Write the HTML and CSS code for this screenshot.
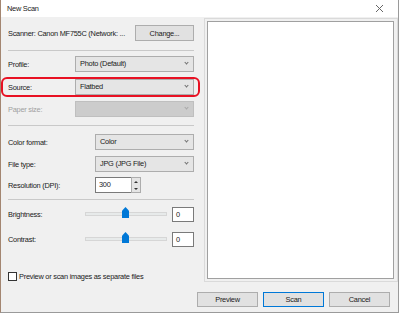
FILE: index.html
```html
<!DOCTYPE html>
<html lang="en">
<head>
  <meta charset="UTF-8">
  <title>New Scan</title>
  <link rel="stylesheet" href="styles.css">
</head>
<body>
  <div class="window">
    <div class="titlebar">
      <span>New Scan</span>
      <svg class="close" width="9" height="9" viewBox="0 0 9 9">
        <path d="M1 1 L8 8 M8 1 L1 8" stroke="#666" stroke-width="1"/>
      </svg>
    </div>

    <div class="main">
      <div class="settings">
        <div class="row scanner">
          <span class="label">Scanner: Canon MF755C (Network: ...</span>
          <button class="btn change">Change...</button>
        </div>
        <div class="sep"></div>

        <div class="row">
          <span class="label">Profile:</span>
          <div class="combo wide">Photo (Default)<span class="chev"></span></div>
        </div>
        <div class="row source">
          <span class="label">Source:</span>
          <div class="combo wide">Flatbed<span class="chev"></span></div>
        </div>
        <div class="row disabled">
          <span class="label">Paper size:</span>
          <div class="combo wide"><span class="chev"></span></div>
        </div>
        <div class="sep sep2"></div>

        <div class="row r-color">
          <span class="label long">Color format:</span>
          <div class="combo narrow">Color<span class="chev"></span></div>
        </div>
        <div class="row r-type">
          <span class="label long">File type:</span>
          <div class="combo narrow">JPG (JPG File)<span class="chev"></span></div>
        </div>
        <div class="row r-res">
          <span class="label long">Resolution (DPI):</span>
          <div class="spin">
            <div class="field">300</div>
            <div class="arrows">
              <span class="up"></span>
              <span class="down"></span>
            </div>
          </div>
        </div>
        <div class="sep sep3"></div>

        <div class="row r-bright">
          <span class="label slide-label">Brightness:</span>
          <div class="slider"><div class="track"></div><div class="thumb"></div></div>
          <div class="field small">0</div>
        </div>
        <div class="row r-contrast">
          <span class="label slide-label">Contrast:</span>
          <div class="slider"><div class="track"></div><div class="thumb"></div></div>
          <div class="field small">0</div>
        </div>

        <div class="check-row">
          <span class="box"></span>
          <span>Preview or scan images as separate files</span>
        </div>
      </div>

      <div class="preview">
        <div class="preview-inner"></div>
      </div>
    </div>

    <div class="footer">
      <button class="btn">Preview</button>
      <button class="btn default">Scan</button>
      <button class="btn">Cancel</button>
    </div>
  </div>
</body>
</html>
```

FILE: styles.css
```css
body {
  margin: 0;
  font-family: "Liberation Sans", Arial, sans-serif;
  font-size: 7.4px;
  letter-spacing: -0.25px;
  color: #1a1a1a;
  background: #fff;
}
.window {
  width: 397px;
  height: 312px;
  background: #f0f0f0;
  border-left: 1px solid #a38671;
  border-right: 1px solid #9a9a9a;
  border-bottom: 1px solid #9a9a9a;
  display: flex;
  flex-direction: column;
}
.titlebar {
  height: 17px;
  background: #fff;
  display: flex;
  align-items: center;
  justify-content: space-between;
  padding: 0 14px 0 6px;
}
.main {
  display: flex;
  height: 265px;
}
.settings {
  width: 199px;
  padding-top: 8px;
}
.row {
  display: flex;
  align-items: center;
  height: 16px;
  padding: 0 6px 0 7px;
  margin-top: 5px;
}
.label {
  width: 67px;
  white-space: nowrap;
}
.label.long {
  width: 87px;
}
.scanner {
  margin-top: 0;
}
.scanner .label {
  flex: 1;
}
.sep {
  height: 1px;
  background: #c9c9c9;
  margin: 9px 6px 0 7px;
}
.btn {
  font: inherit;
  letter-spacing: inherit;
  height: 16px;
  background: #e1e1e1;
  border: 1px solid #adadad;
  padding: 0;
  color: #1a1a1a;
}
.change {
  width: 59px;
}
.combo {
  position: relative;
  height: 16px;
  box-sizing: border-box;
  background: #e5e5e5;
  border: 1px solid #adadad;
  padding-left: 4px;
  line-height: 14px;
}
.wide {
  width: 119px;
}
.narrow {
  width: 99px;
}
.chev {
  position: absolute;
  right: 5px;
  top: 4px;
  width: 2px;
  height: 2px;
  border-right: 1px solid #707070;
  border-bottom: 1px solid #707070;
  transform: rotate(45deg);
}
.source {
  height: 14px;
  margin: 5px 0 0 0;
  padding: 1px 4px 1px 5px;
  border: 2px solid #e81123;
  border-radius: 6px;
  width: 186px;
}
.disabled {
  margin-top: 4px;
  color: #a0a0a0;
}
.disabled .combo {
  background: #cccccc;
  border-color: #bfbfbf;
}
.disabled .chev {
  border-color: #a8a8a8;
}
.sep2 {
  margin-top: 8px;
}
.r-color {
  margin-top: 8px;
}
.r-type {
  margin-top: 6px;
}
.spin {
  display: flex;
}
.field {
  box-sizing: border-box;
  height: 16px;
  background: #fff;
  border: 1px solid #7a7a7a;
  padding-left: 3px;
  line-height: 14px;
}
.spin .field {
  width: 36px;
  border-right: none;
}
.arrows {
  width: 10px;
  height: 16px;
  box-sizing: border-box;
  border: 1px solid #adadad;
  background: #e5e5e5;
  display: flex;
  flex-direction: column;
  justify-content: space-around;
  align-items: center;
}
.up, .down {
  width: 0;
  height: 0;
  border-left: 2px solid transparent;
  border-right: 2px solid transparent;
}
.up {
  border-bottom: 2px solid #333;
}
.down {
  border-top: 2px solid #333;
}
.sep3 {
  margin-top: 6px;
}
.r-bright {
  margin-top: 7px;
  height: 15px;
}
.r-contrast {
  margin-top: 10px;
  height: 15px;
}
.slide-label {
  width: 77px;
}
.slider {
  position: relative;
  width: 82px;
  height: 15px;
  margin-right: 5px;
}
.track {
  position: absolute;
  left: 0;
  right: 0;
  top: 5px;
  height: 2px;
  background: #e7eaea;
  border: 1px solid #d6d6d6;
}
.thumb {
  position: absolute;
  left: 37px;
  top: 0;
  width: 7px;
  height: 11px;
  background: #0078d7;
  clip-path: polygon(50% 0, 100% 35%, 100% 100%, 0 100%, 0 35%);
}
.field.small {
  width: 22px;
  height: 15px;
  line-height: 13px;
}
.check-row {
  display: flex;
  align-items: center;
  gap: 2px;
  margin: 24px 0 0 7px;
  height: 10px;
}
.box {
  width: 7px;
  height: 7px;
  border: 1px solid #333;
  background: #fff;
}
.preview {
  flex: 1;
  margin-top: 1px;
  height: 264px;
  box-sizing: border-box;
  border: 1px solid #dadada;
  padding: 2px 3px 2px 2px;
  margin-left: 4px;
}
.preview-inner {
  height: 100%;
  box-sizing: border-box;
  background: #fff;
  border: 1px solid #a0a0a0;
}
.footer {
  display: flex;
  justify-content: flex-end;
  gap: 5px;
  padding: 10px 8px 0 0;
}
.footer .btn {
  width: 61px;
  height: 15px;
}
.footer .default {
  border-color: #0078d7;
}
```
